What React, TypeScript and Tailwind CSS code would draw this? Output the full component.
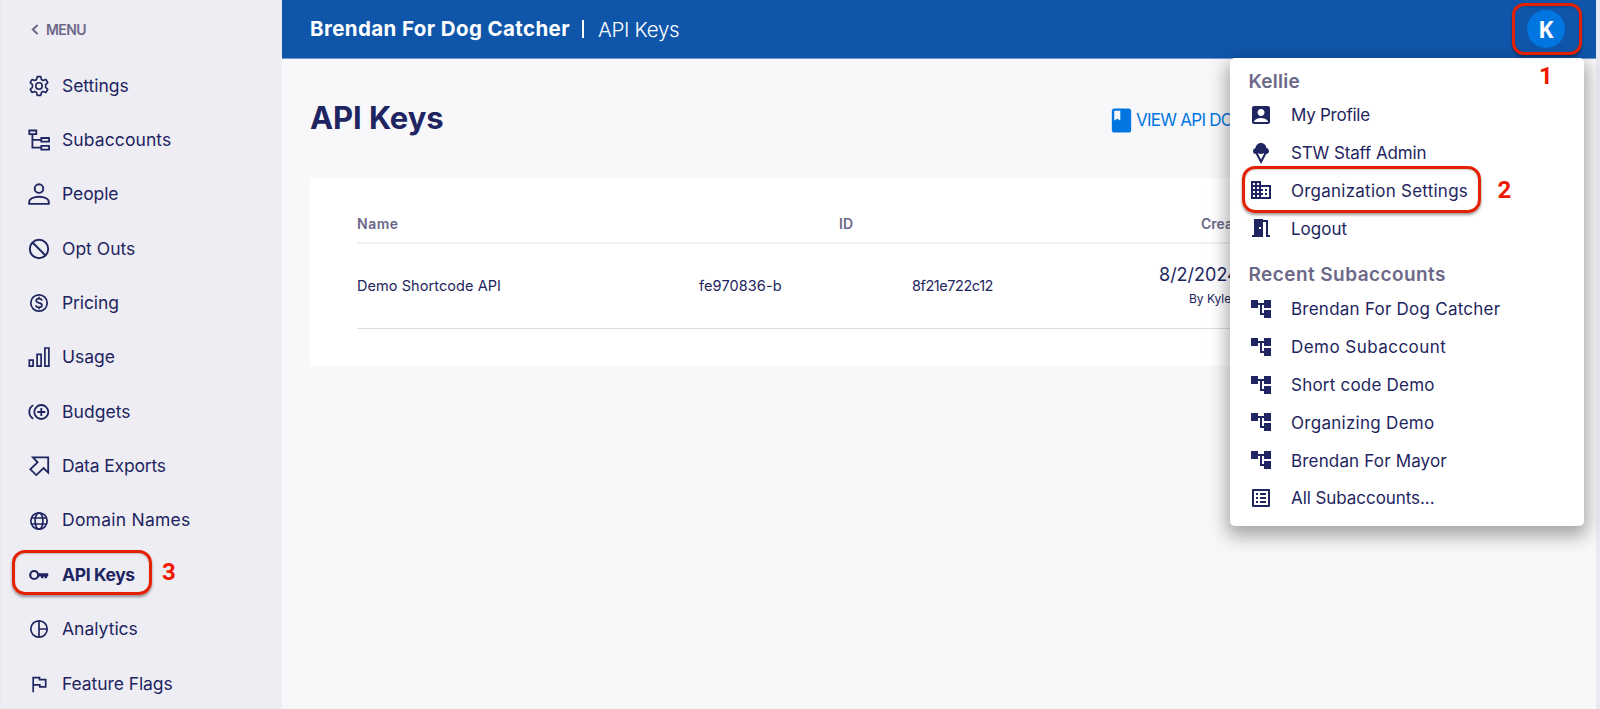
import type { ReactNode } from "react";
import {
  MdAccountBox,
  MdAccountTree,
  MdBook,
  MdDomain,
  MdIcecream,
  MdListAlt,
  MdMeetingRoom,
} from "react-icons/md";

function Glyph({ children, width = 1.9 }: { children: ReactNode; width?: number }) {
  return (
    <svg
      viewBox="0 0 24 24"
      className="h-6 w-6 shrink-0"
      fill="none"
      stroke="currentColor"
      strokeWidth={width}
    >
      {children}
    </svg>
  );
}

const navItems: { label: string; tracking: string; icon: ReactNode; active?: boolean }[] = [
  {
    label: "Settings",
    tracking: "tracking-[-0.05px]",
    icon: (
      <Glyph width={1.6}>
        <path
          strokeLinejoin="round"
          d="M10.200 2.600h3.600l.6 2.900 1.700 1 2.800-1 1.900 3.200-2.200 2v2.600l2.200 2-1.900 3.200-2.800-1-1.700 1-.6 2.900h-3.600l-.6-2.900-1.700-1-2.800 1-1.900-3.200 2.200-2v-2.600l-2.200-2 1.900-3.200 2.800 1 1.700-1z"
        />
        <circle cx="12" cy="12" r="3.200" />
      </Glyph>
    ),
  },
  {
    label: "Subaccounts",
    tracking: "tracking-[0.1px]",
    icon: (
      <Glyph width={1.8}>
        <path d="M2.300 2.500h7v3.600h-7zM14.300 10h7.700v3.700h-7.700zM14.300 17.900h7.700v3.700h-7.700zM5.400 6v13.700h9M5.400 11.800h9" />
      </Glyph>
    ),
  },
  {
    label: "People",
    tracking: "tracking-[-0.08px]",
    icon: (
      <Glyph>
        <circle cx="12" cy="6.600" r="4.300" />
        <path d="M2.200 21.900v-1.900c0-3 4-5.200 9.800-5.200s9.800 2.200 9.800 5.200v1.900z" />
      </Glyph>
    ),
  },
  {
    label: "Opt Outs",
    tracking: "tracking-normal",
    icon: (
      <Glyph>
        <circle cx="12" cy="12" r="9.200" />
        <path d="M5.500 5.500l13 13" />
      </Glyph>
    ),
  },
  {
    label: "Pricing",
    tracking: "tracking-[-0.1px]",
    icon: (
      <Glyph width={1.700}>
        <circle cx="12" cy="12" r="8.200" />
        <path d="M14.900 9.600c-.2-1.300-1.300-2-2.900-2s-2.800.8-2.800 2.100c0 3.100 5.800 1.300 5.800 4.500 0 1.400-1.300 2.200-3 2.200s-3-.8-3.100-2.200M12 5.800v2M12 16.200v2" />
      </Glyph>
    ),
  },
  {
    label: "Usage",
    tracking: "tracking-normal",
    icon: (
      <Glyph width={1.700}>
        <path d="M2.300 15.200h3.800v6h-3.800zM10.100 9.300h4v11.900h-4zM17.900 3h4v18.200h-4z" />
      </Glyph>
    ),
  },
  {
    label: "Budgets",
    tracking: "tracking-[0.05px]",
    icon: (
      <Glyph width={1.800}>
        <circle cx="14.300" cy="12" r="7" />
        <path d="M14.300 8v8M10.300 12h8M6.200 5.300c-5.200 3-5.200 10.400 0 13.400" />
      </Glyph>
    ),
  },
  {
    label: "Data Exports",
    tracking: "tracking-[-0.17px]",
    icon: (
      <Glyph width={1.800}>
        <path d="M5.900 3.300h15.300v15.300l-4.600-4.500-7.300 7-6-5.800 7.300-7z" />
      </Glyph>
    ),
  },
  {
    label: "Domain Names",
    tracking: "tracking-[0.25px]",
    icon: (
      <Glyph width={1.700}>
        <circle cx="12" cy="12" r="8.200" />
        <ellipse cx="12" cy="12" rx="3.900" ry="8.200" />
        <path d="M4.600 9h14.800M4.600 15h14.800" />
      </Glyph>
    ),
  },
  {
    label: "API Keys",
    tracking: "tracking-[-0.38px]",
    active: true,
    icon: (
      <Glyph width={2.200}>
        <circle cx="7.200" cy="12" r="4" />
        <path fill="currentColor" stroke="none" d="M11 10.300h10.200v3.200h-1.200v1.700h-2.400v-1.400h-1.200v1.400h-2.400v-1.700h-3z" />
      </Glyph>
    ),
  },
  {
    label: "Analytics",
    tracking: "tracking-normal",
    icon: (
      <Glyph width={1.700}>
        <circle cx="12" cy="12" r="8.200" />
        <path d="M12 3.800v16.400M12 12h8.200" />
      </Glyph>
    ),
  },
  {
    label: "Feature Flags",
    tracking: "tracking-[-0.08px]",
    icon: (
      <Glyph width={1.700}>
        <path d="M6.200 20.300V5.600h6.300v2h6.200v7.300h-5.900v-2H6.200" />
      </Glyph>
    ),
  },
];

const accountLinks = [
  { label: "My Profile", tracking: "tracking-[-0.26px]", Icon: MdAccountBox },
  { label: "STW Staff Admin", tracking: "tracking-[-0.13px]", Icon: MdIcecream },
  { label: "Organization Settings", tracking: "tracking-[0.24px]", Icon: MdDomain },
  { label: "Logout", tracking: "tracking-normal", Icon: MdMeetingRoom },
];

const recentLinks = [
  { label: "Brendan For Dog Catcher", tracking: "tracking-[0.24px]", Icon: MdAccountTree },
  { label: "Demo Subaccount", tracking: "tracking-[0.46px]", Icon: MdAccountTree },
  { label: "Short code Demo", tracking: "tracking-[0.22px]", Icon: MdAccountTree },
  { label: "Organizing Demo", tracking: "tracking-[0.28px]", Icon: MdAccountTree },
  { label: "Brendan For Mayor", tracking: "tracking-[0.16px]", Icon: MdAccountTree },
  { label: "All Subaccounts...", tracking: "tracking-[-0.06px]", Icon: MdListAlt },
];

function Sidebar() {
  return (
    <nav className="h-full w-[282px] shrink-0 border-l border-[#e8e7f0] bg-[#eeedf4] pt-[17px]">
      <div className="flex h-6 items-center pl-[30px] text-[14px] font-semibold tracking-[-0.6px] text-[#6c6888]">
        <svg viewBox="0 0 8 12" className="mr-[7px] h-[11px] w-[8px]" fill="none" stroke="currentColor" strokeWidth="2.200">
          <path d="M6.800 1L1.600 6l5.200 5" />
        </svg>
        MENU
      </div>
      <ul className="mt-[17.500px]">
        {navItems.map((item) => (
          <li key={item.label} className="flex h-[54.360px] items-center pl-[26px]">
            {item.icon}
            <span
              className={`ml-[11px] text-[17.500px] whitespace-nowrap ${item.tracking} ${item.active ? "font-bold" : ""}`}
            >
              {item.label}
            </span>
          </li>
        ))}
      </ul>
    </nav>
  );
}

function MenuList({ links }: { links: typeof accountLinks }) {
  return (
    <ul>
      {links.map(({ label, tracking, Icon }) => (
        <li key={label} className="flex h-[37.800px] items-center">
          <Icon className="h-6 w-6 shrink-0" />
          <span className={`ml-[18.500px] pt-[2px] text-[17px] whitespace-nowrap ${tracking}`}>{label}</span>
        </li>
      ))}
    </ul>
  );
}

function AccountMenu() {
  return (
    <div className="absolute top-[58px] left-[1230px] h-[467.500px] w-[354px] rounded-[5px] bg-white pl-[18.500px] shadow-[0_7px_18px_3px_rgba(0,0,0,0.34)]">
      <h2 className="mt-[12px] flex h-6 items-center text-[19px] font-semibold tracking-[0.25px] text-[#6c6888]">Kellie</h2>
      <div className="mt-[2px]">
        <MenuList links={accountLinks} />
      </div>
      <h2 className="mt-[16px] flex h-6 items-center text-[19px] font-semibold tracking-[0.43px] text-[#6c6888]">
        Recent Subaccounts
      </h2>
      <div className="mt-[3px]">
        <MenuList links={recentLinks} />
      </div>
    </div>
  );
}

const ring =
  "absolute border-[3px] border-[#e32000] shadow-[0_2px_3px_rgba(0,0,0,0.4),inset_0_1px_2px_rgba(0,0,0,0.2)]";
const step = "absolute font-['Roboto',sans-serif] text-[24px] leading-6 font-bold text-[#f01800]";

export default function App() {
  return (
    <div className="relative flex h-[709px] w-[1600px] overflow-hidden bg-[#f8f8fb] font-['Inter',sans-serif] text-[#1e2560]">
      <Sidebar />
      <div className="flex min-w-0 flex-1 flex-col border-r-[4px] border-[#eaeaf2]">
        <header className="flex h-[59px] shrink-0 items-center border-b border-[#6f9ad0] bg-[#0f56ab] pl-[28px] text-white">
          <span className="w-[258px] text-[20.500px] font-bold tracking-[0.39px] whitespace-nowrap">
            Brendan For Dog Catcher
          </span>
          <span className="ml-[14px] h-[18px] w-[2px] bg-white" />
          <span className="ml-[14px] pt-[2px] text-[20.500px] font-light tracking-[-0.3px] whitespace-nowrap">API Keys</span>
          <span className="mr-[31px] ml-auto flex h-[38px] w-[38px] items-center justify-center rounded-full bg-[#0276e0] font-['Noto_Sans',sans-serif] text-[23px] font-bold">
            K
          </span>
        </header>
        <main className="flex-1 pl-[28px]">
          <div className="flex h-[119px] items-center">
            <h1 className="w-[797px] text-[31px] font-bold tracking-[-0.1px]">API Keys</h1>
            <a className="mt-[4px] flex items-center text-[17px] tracking-[-0.75px] whitespace-nowrap text-[#0276e0]">
              <MdBook className="h-[29px] w-[29px]" />
              <span className="pt-px">VIEW API DOCS</span>
            </a>
          </div>
          <section className="h-[188px] w-[1260px] bg-white px-[47px] pt-[27px]">
            <div className="flex h-[39px] border-b-2 border-[#eeeef6] text-[14px] font-semibold text-[#6c6888]">
              <span className="w-[482px] pt-[8px] tracking-[0.5px]">Name</span>
              <span className="w-[362px] pt-[8px]">ID</span>
              <span className="pt-[8px]">Created</span>
            </div>
            <div className="flex h-[85px] items-center border-b border-[#dcdbe8] text-[14.500px]">
              <span className="w-[342px] tracking-[0.07px]">Demo Shortcode API</span>
              <span className="w-[213px] tracking-[0.1px]">fe970836-b</span>
              <span className="w-[247px] tracking-[-0.45px]">8f21e722c12</span>
              <span className="flex flex-col pt-[2px] whitespace-nowrap">
                <span className="text-[18px] leading-6">8/2/2024</span>
                <span className="pl-[30px] text-[12px] leading-6">By Kyle</span>
              </span>
            </div>
          </section>
        </main>
      </div>
      <AccountMenu />
      <div className={`${ring} top-[3px] left-[1512px] h-[52px] w-[70px] rounded-[12px]`} />
      <div className={`${ring} top-[166px] left-[1242px] h-[47px] w-[239px] rounded-[13px]`} />
      <div className={`${ring} top-[550px] left-[12px] h-[45px] w-[140px] rounded-[13px]`} />
      <span className={`${step} top-[64px] left-[1539px]`}>1</span>
      <span className={`${step} top-[178px] left-[1497.500px]`}>2</span>
      <span className={`${step} top-[560px] left-[162px]`}>3</span>
    </div>
  );
}
